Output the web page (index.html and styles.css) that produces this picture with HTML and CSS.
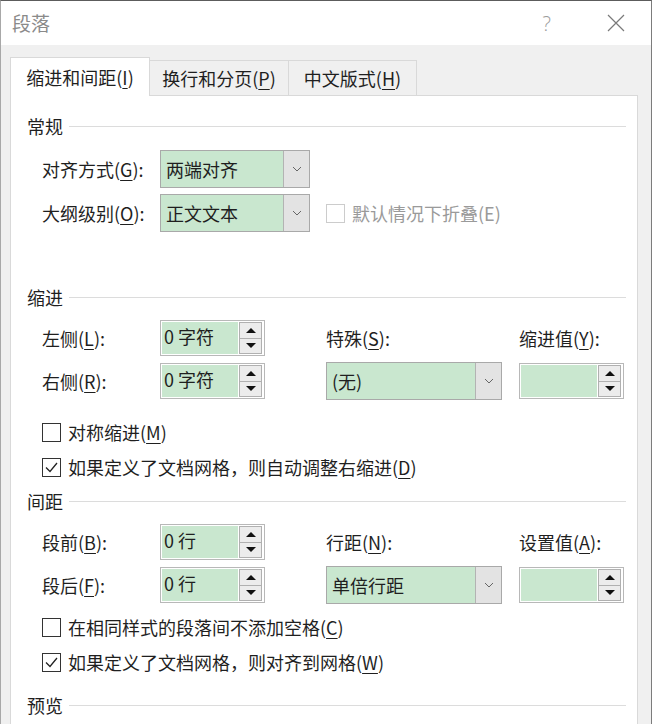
FILE: index.html
```html
<!DOCTYPE html>
<html lang="zh">
<head>
    <meta charset="UTF-8">
    <title>段落</title>
    <link rel="stylesheet" href="styles.css">
</head>
<body>
<div class="window">
    <div class="titlebar">
        <span class="title">段落</span>
        <span class="help">?</span>
        <svg class="close" width="18" height="18" viewBox="0 0 18 18">
            <path d="M1 1 L17 17 M17 1 L1 17" stroke="#7a7a7a" stroke-width="1.2" fill="none"/>
        </svg>
    </div>
    <div class="dialog">
        <div class="tabs">
            <div class="tab active">缩进和间距(<u>I</u>)</div>
            <div class="tab">换行和分页(<u>P</u>)</div>
            <div class="tab last">中文版式(<u>H</u>)</div>
        </div>
        <div class="panel">
            <div class="section-title"><span>常规</span></div>
            <div class="rows">
                <div class="row">
                    <div class="label">对齐方式(<u>G</u>):</div>
                    <div class="select wide">
                        <div class="val">两端对齐</div>
                        <div class="drop"><svg width="10" height="6" viewBox="0 0 10 6"><polyline points="1,1 5,5 9,1" stroke="#666" fill="none"/></svg></div>
                    </div>
                </div>
                <div class="row">
                    <div class="label">大纲级别(<u>O</u>):</div>
                    <div class="select wide">
                        <div class="val">正文文本</div>
                        <div class="drop"><svg width="10" height="6" viewBox="0 0 10 6"><polyline points="1,1 5,5 9,1" stroke="#666" fill="none"/></svg></div>
                    </div>
                    <div class="check disabled collapse">
                        <span class="box"></span>
                        <span>默认情况下折叠(E)</span>
                    </div>
                </div>
            </div>

            <div class="section-title indent-title"><span>缩进</span></div>
            <div class="grid">
                <div class="label">左侧(<u>L</u>):</div>
                <div class="spin">
                    <div class="spin-val">0 字符</div>
                    <div class="spin-btns"><div class="btn"><i class="up"></i></div><div class="btn"><i class="down"></i></div></div>
                </div>
                <div class="label">特殊(<u>S</u>):</div>
                <div class="label">缩进值(<u>Y</u>):</div>

                <div class="label">右侧(<u>R</u>):</div>
                <div class="spin">
                    <div class="spin-val">0 字符</div>
                    <div class="spin-btns"><div class="btn"><i class="up"></i></div><div class="btn"><i class="down"></i></div></div>
                </div>
                <div class="select mid">
                    <div class="val">(无)</div>
                    <div class="drop"><svg width="10" height="6" viewBox="0 0 10 6"><polyline points="1,1 5,5 9,1" stroke="#666" fill="none"/></svg></div>
                </div>
                <div class="spin">
                    <div class="spin-val"></div>
                    <div class="spin-btns"><div class="btn"><i class="up"></i></div><div class="btn"><i class="down"></i></div></div>
                </div>
            </div>
            <div class="checks first-checks">
                <div class="check">
                    <span class="box"></span>
                    <span>对称缩进(<u>M</u>)</span>
                </div>
                <div class="check">
                    <span class="box"><svg width="17" height="17" viewBox="0 0 17 17"><polyline points="3,8.5 7,12.5 14,4" stroke="#222" stroke-width="1.3" fill="none"/></svg></span>
                    <span>如果定义了文档网格，则自动调整右缩进(<u>D</u>)</span>
                </div>
            </div>

            <div class="section-title space-title"><span>间距</span></div>
            <div class="grid">
                <div class="label">段前(<u>B</u>):</div>
                <div class="spin">
                    <div class="spin-val">0 行</div>
                    <div class="spin-btns"><div class="btn"><i class="up"></i></div><div class="btn"><i class="down"></i></div></div>
                </div>
                <div class="label">行距(<u>N</u>):</div>
                <div class="label">设置值(<u>A</u>):</div>

                <div class="label">段后(<u>F</u>):</div>
                <div class="spin">
                    <div class="spin-val">0 行</div>
                    <div class="spin-btns"><div class="btn"><i class="up"></i></div><div class="btn"><i class="down"></i></div></div>
                </div>
                <div class="select mid">
                    <div class="val">单倍行距</div>
                    <div class="drop"><svg width="10" height="6" viewBox="0 0 10 6"><polyline points="1,1 5,5 9,1" stroke="#666" fill="none"/></svg></div>
                </div>
                <div class="spin">
                    <div class="spin-val"></div>
                    <div class="spin-btns"><div class="btn"><i class="up"></i></div><div class="btn"><i class="down"></i></div></div>
                </div>
            </div>
            <div class="checks second-checks">
                <div class="check">
                    <span class="box"></span>
                    <span>在相同样式的段落间不添加空格(<u>C</u>)</span>
                </div>
                <div class="check">
                    <span class="box"><svg width="17" height="17" viewBox="0 0 17 17"><polyline points="3,8.5 7,12.5 14,4" stroke="#222" stroke-width="1.3" fill="none"/></svg></span>
                    <span>如果定义了文档网格，则对齐到网格(<u>W</u>)</span>
                </div>
            </div>

            <div class="section-title preview-title"><span>预览</span></div>
        </div>
    </div>
</div>
</body>
</html>
```

FILE: styles.css
```css
* {
    box-sizing: border-box;
}
body {
    margin: 0;
    font-family: "Noto Sans CJK SC", "Liberation Sans", sans-serif;
    font-size: 18px;
    color: #1f1f1f;
    background: #fff;
}
u {
    text-decoration-thickness: 1px;
    text-underline-offset: 3px;
}
.window {
    width: 652px;
    height: 724px;
    overflow: hidden;
    display: flex;
    flex-direction: column;
    background: #f0f0f0;
    border-top: 1px solid #5c5c5c;
    border-left: 1px solid #a8a8a8;
    border-right: 1px solid #7c7c7c;
}
.titlebar {
    height: 44px;
    flex-shrink: 0;
    background: #fff;
    display: flex;
    align-items: center;
    padding-left: 11px;
}
.title {
    flex: 1;
    color: #8a8a8a;
    font-size: 19px;
    line-height: 24px;
}
.help {
    color: #9c9c9c;
    font-size: 20px;
    font-family: "Open Sans", sans-serif;
    font-weight: 300;
    margin-right: 56px;
}
.close {
    margin-right: 26px;
}
.dialog {
    flex: 1;
    display: flex;
    flex-direction: column;
    padding: 12px 13px 0 9px;
}
.tabs {
    display: flex;
    align-items: flex-start;
    height: 39px;
    margin-bottom: -1px;
    position: relative;
    z-index: 1;
}
.tab {
    height: 35px;
    margin-top: 3px;
    width: 140px;
    margin-left: -1px;
    border: 1px solid #d9d9d9;
    border-bottom: none;
    background: #f0f0f0;
    display: flex;
    align-items: center;
    justify-content: center;
    line-height: 24px;
}
.tab.active {
    height: 39px;
    margin-top: 0;
    margin-left: 0;
    background: #fff;
}
.tab.last {
    width: 129px;
}
.panel {
    flex: 1;
    background: #fff;
    border: 1px solid #d9d9d9;
    border-bottom: none;
    padding: 18px 11px 0 16px;
}
.section-title {
    display: flex;
    align-items: center;
    height: 24px;
    line-height: 24px;
}
.section-title::after {
    content: "";
    flex: 1;
    height: 1px;
    background: #dcdcdc;
    margin-left: 6px;
}
.indent-title {
    margin-top: 53px;
}
.space-title {
    margin-top: 7px;
}
.preview-title {
    margin-top: 16px;
}
.rows {
    margin-top: 12px;
    padding-left: 15px;
    display: flex;
    flex-direction: column;
    gap: 6px;
}
.row {
    display: flex;
    align-items: center;
    height: 38px;
}
.label {
    line-height: 24px;
    white-space: nowrap;
}
.row .label {
    width: 118px;
}
.select {
    display: flex;
    height: 38px;
    border: 1px solid #a9a9a9;
    background: #c9e7cf;
}
.select.wide {
    width: 150px;
}
.select.mid {
    width: 176px;
}
.select .val {
    flex: 1;
    padding-left: 5px;
    line-height: 36px;
}
.select .drop {
    width: 26px;
    border-left: 1px solid #b3b3b3;
    background: #e3e3e3;
    display: flex;
    align-items: center;
    justify-content: center;
}
.grid {
    margin-top: 11px;
    padding-left: 15px;
    display: grid;
    grid-template-columns: 118px 166px 193px 105px;
    grid-template-rows: 36px 38px;
    row-gap: 6px;
    align-items: center;
}
.spin {
    width: 105px;
    height: 36px;
    display: flex;
    border: 1px solid #b8b8b8;
    background: #fff;
    padding: 1px 2px 1px 1px;
}
.spin-val {
    flex: 1;
    background: #c9e7cf;
    padding-left: 2px;
    line-height: 28px;
}
.spin-btns {
    width: 24px;
    display: flex;
    flex-direction: column;
    padding-left: 1px;
}
.btn {
    flex: 1;
    border: 1px solid #b0b0b0;
    background: #ececec;
    display: flex;
    align-items: center;
    justify-content: center;
}
.btn + .btn {
    margin-top: -1px;
}
.up {
    width: 0;
    height: 0;
    border-left: 5px solid transparent;
    border-right: 5px solid transparent;
    border-bottom: 5px solid #111;
}
.down {
    width: 0;
    height: 0;
    border-left: 5px solid transparent;
    border-right: 5px solid transparent;
    border-top: 5px solid #111;
}
.checks {
    padding-left: 15px;
    display: flex;
    flex-direction: column;
    gap: 5px;
}
.first-checks {
    margin-top: 17px;
}
.second-checks {
    margin-top: 8px;
}
.check {
    height: 30px;
    display: flex;
    align-items: center;
    gap: 7px;
    line-height: 24px;
    white-space: nowrap;
}
.box {
    width: 19px;
    height: 19px;
    border: 1px solid #333;
    background: #fff;
    display: flex;
    align-items: center;
    justify-content: center;
}
.check.disabled {
    color: #9a9a9a;
}
.check.disabled .box {
    border-color: #cccccc;
}
.collapse {
    margin-left: 16px;
}
```
